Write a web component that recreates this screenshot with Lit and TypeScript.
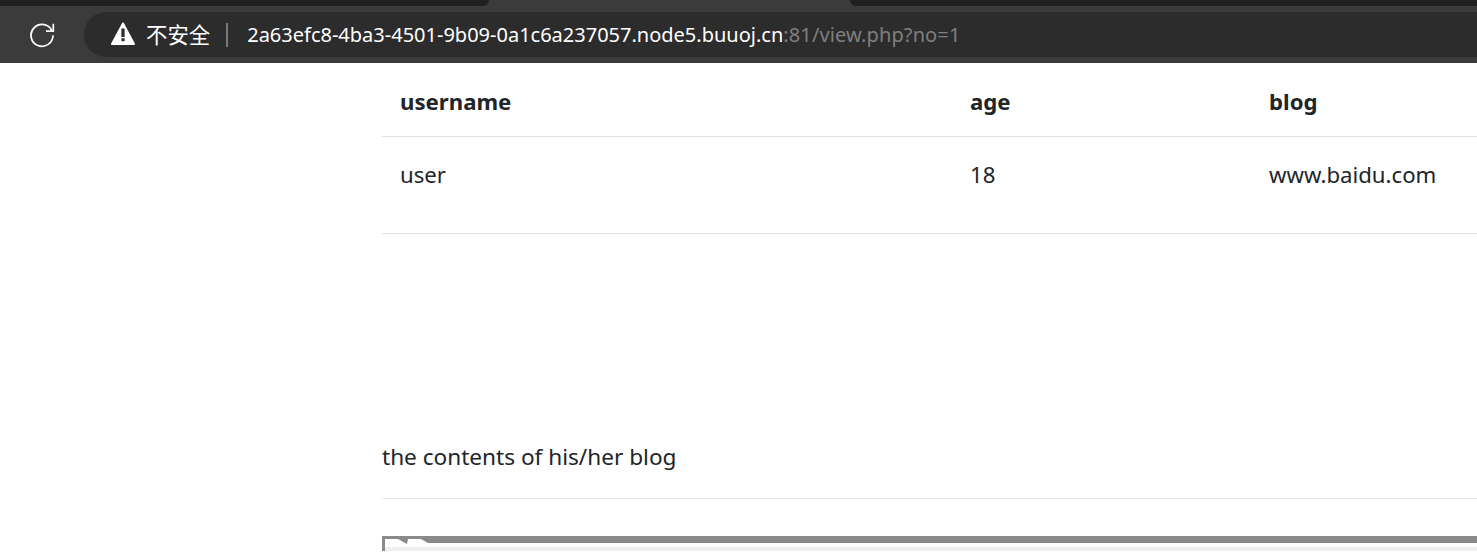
import { LitElement, html, css } from "lit";
import { customElement } from "lit/decorators.js";

@customElement("app-root")
export class AppRoot extends LitElement {
  static styles = css`
    :host { display: block; width: 1477px; height: 555px; overflow: hidden; background: #fff; font-family: "Noto Sans", "Noto Sans CJK SC", sans-serif; color: #212529; }
    .strip { height: 6px; background: #3b3b3b; display: flex; }
    .tab-l { width: 489px; background: #202020; border-bottom-right-radius: 6px; }
    .tab-gap { width: 361px; }
    .tab-r { flex: 1; background: #202020; border-bottom-left-radius: 6px; }
    .toolbar { height: 57px; background: #3b3b3b; display: flex; align-items: flex-start; padding-top: 6px; box-sizing: border-box; }
    .reload { width: 84px; height: 45px; display: flex; align-items: center; justify-content: center; flex: none; }
    .pill { flex: 1; height: 45px; background: #2c2c2c; border-radius: 22px 0 0 22px; display: flex; align-items: center; padding-left: 27px; font-size: 20px; white-space: nowrap; }
    .warn { flex: none; margin: 0 11px 2px 0; display: block; }
    .insecure { color: #fff; font-family: "Noto Sans CJK SC", sans-serif; font-size: 21.4px; line-height: 26px; margin-bottom: 2px; }
    .sep { width: 2px; height: 24px; background: #7a7a7a; margin: 0 19px 0 16px; }
    .host { color: #fff; }
    .rest { color: #7f7f7f; letter-spacing: 0.12px; }
    .main { padding-left: 382px; }
    .tbl { display: grid; grid-template-columns: 570px 299px 1fr; font-size: 22.2px; }
    .cell { padding-left: 18px; display: flex; align-items: center; white-space: nowrap; }
    .head { height: 74px; font-weight: 700; border-bottom: 1px solid #dee2e6; padding-top: 3px; box-sizing: border-box; }
    .body { height: 97px; border-bottom: 1px solid #dee2e6; box-sizing: border-box; padding-bottom: 22px; }
    .content { margin-top: 199px; font-size: 22.6px; height: 66px; border-bottom: 1px solid #e4e4e4; box-sizing: border-box; line-height: 48px; white-space: nowrap; }
    .frame { display: block; margin-top: 37px; }
  `;
  render() {
    return html`
      <div class="strip"><div class="tab-l"></div><div class="tab-gap"></div><div class="tab-r"></div></div>
      <div class="toolbar">
        <div class="reload">
          <svg width="26" height="26" viewBox="0 0 26 26" fill="none" stroke="#fff" stroke-width="1.7">
            <path d="M23.2 9.2A11 11 0 1 0 24 13.2"/>
            <path d="M24.3 1.8V9.2H17"/>
          </svg>
        </div>
        <div class="pill">
          <svg class="warn" width="24" height="23" viewBox="0 0 24 23">
            <path fill="#fff" stroke="#fff" stroke-width="2" stroke-linejoin="round" d="M12 1.5 1 22h22z"/>
            <rect x="10.4" y="6.5" width="3.2" height="8.5" fill="#2c2c2c"/>
            <rect x="10.4" y="16.3" width="3.2" height="2.9" fill="#2c2c2c"/>
          </svg>
          <span class="insecure">不安全</span>
          <span class="sep"></span>
          <span class="host">2a63efc8-4ba3-4501-9b09-0a1c6a237057.node5.buuoj.cn</span><span class="rest">:81/view.php?no=1</span>
        </div>
      </div>
      <div class="main">
        <div class="tbl">
          <div class="cell head">username</div><div class="cell head">age</div><div class="cell head">blog</div>
          <div class="cell body">user</div><div class="cell body">18</div><div class="cell body">www.baidu.com</div>
        </div>
        <div class="content">the contents of his/her blog</div>
        <svg class="frame" width="1095" height="19" viewBox="0 0 1095 19">
          <rect x="3" y="11" width="1092" height="4" fill="#efefef"/>
          <path fill="#8a8a8a" d="M0 0H1095V7H46L39 3H26L25 8 16 3H3V15H0Z"/>
        </svg>
      </div>
    `;
  }
}
